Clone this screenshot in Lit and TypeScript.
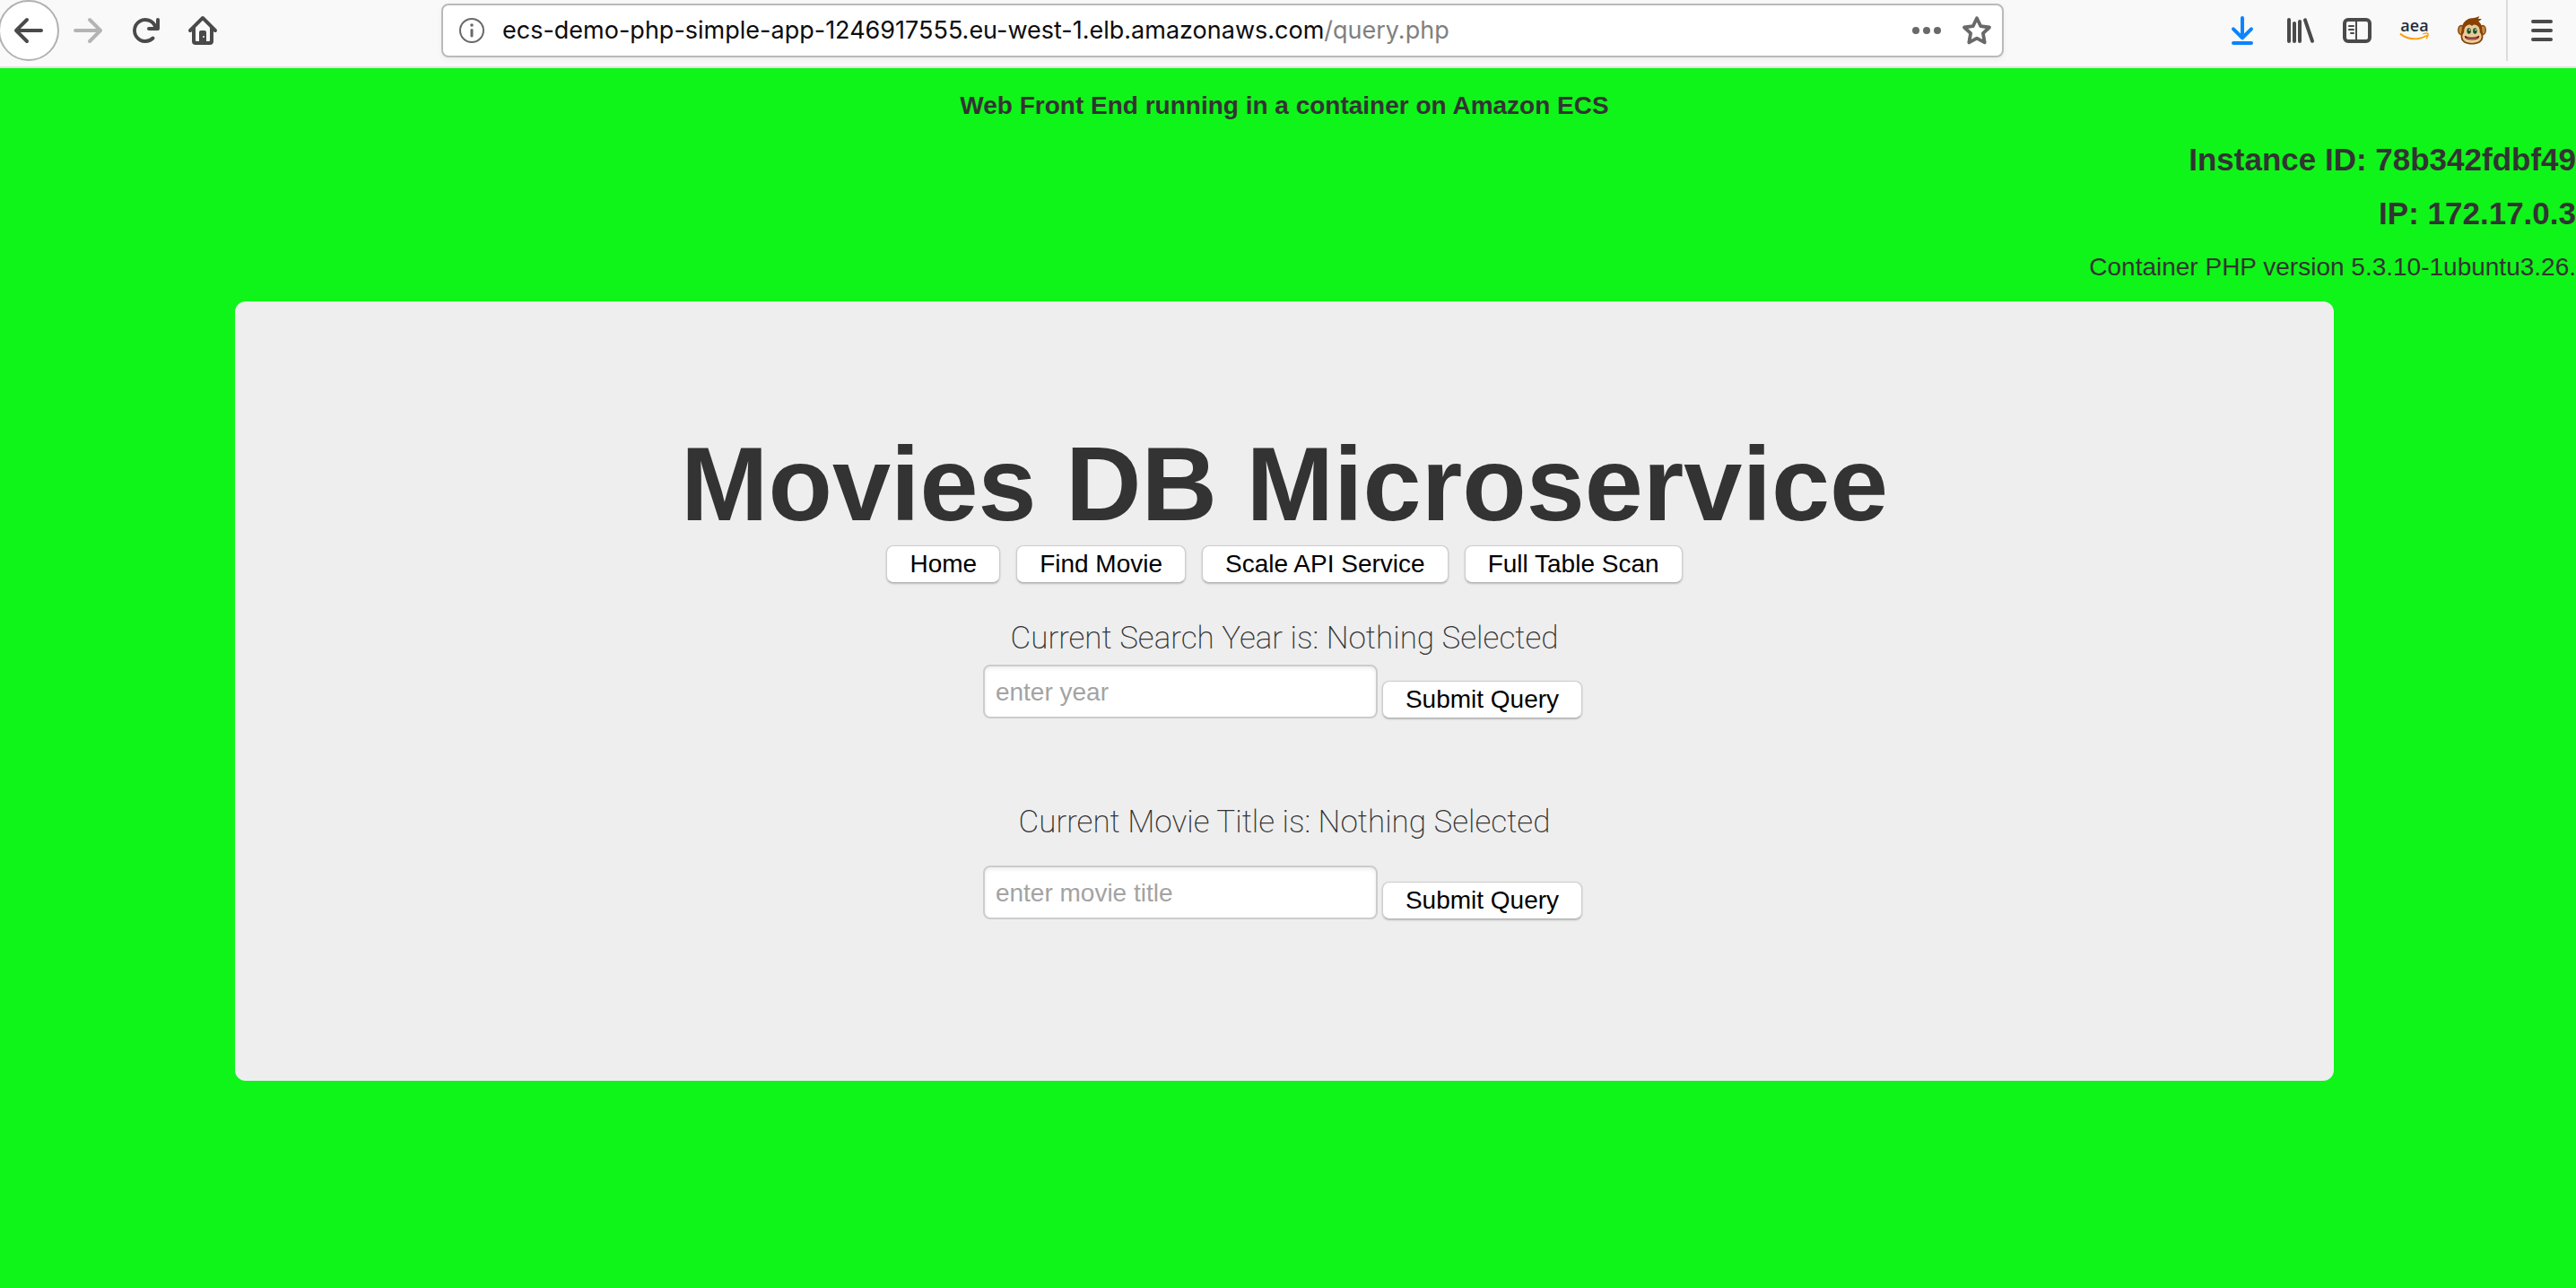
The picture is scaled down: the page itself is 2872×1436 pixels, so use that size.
import { LitElement, html, css, svg } from "lit";
import { customElement } from "lit/decorators.js";

const icon = (body: unknown) => html`<svg class="icon" viewBox="0 0 16 16" aria-hidden="true">${body}</svg>`;

const icons = {
  back: svg`<path d="M15 7H3.414l4.293-4.293a1 1 0 0 0-1.414-1.414l-6 6a1 1 0 0 0 0 1.414l6 6a1 1 0 0 0 1.414-1.414L3.414 9H15a1 1 0 0 0 0-2z"/>`,
  forward: svg`<path d="M1 7h11.586L8.293 2.707a1 1 0 0 1 1.414-1.414l6 6a1 1 0 0 1 0 1.414l-6 6a1 1 0 0 1-1.414-1.414L12.586 9H1a1 1 0 0 1 0-2z"/>`,
  reload: svg`<path d="M15 1a1 1 0 0 0-1 1v2.418A6.995 6.995 0 1 0 8 15a6.954 6.954 0 0 0 4.95-2.05 1 1 0 0 0-1.414-1.414A5.019 5.019 0 1 1 12.549 6H10a1 1 0 0 0 0 2h5a1 1 0 0 0 1-1V2a1 1 0 0 0-1-1z"/>`,
  home: svg`<path fill-rule="evenodd" d="M15.707 7.293l-7-7a1 1 0 0 0-1.414 0l-7 7a1 1 0 0 0 1.414 1.414L2 8.414V14a2 2 0 0 0 2 2h8a2 2 0 0 0 2-2V8.414l.293.293a1 1 0 0 0 1.414-1.414zM12 13.500a.5.5 0 0 1-.5.5H10V9a1 1 0 0 0-1-1H7a1 1 0 0 0-1 1v5H4.500a.5.5 0 0 1-.5-.5V6.414l4-4 4 4zM8.500 11a.5.5 0 1 1 0 1 .5.5 0 0 1 0-1z"/>`,
  info: svg`<circle cx="8" cy="8" r="6.500" fill="none" stroke="currentColor"/><circle cx="8" cy="5" r=".9"/><rect x="7.250" y="7" width="1.500" height="4.800" rx=".75"/>`,
  more: svg`<circle cx="2" cy="8" r="2"/><circle cx="8" cy="8" r="2"/><circle cx="14" cy="8" r="2"/>`,
  star: svg`<path d="M8 1.100l2.150 4.500 4.850.65-3.550 3.350.9 5.100L8 12.300l-4.350 2.400.9-5.100L1 6.250l4.850-.65z" fill="none" stroke="currentColor" stroke-width="1.900" stroke-linejoin="round"/>`,
  download: svg`<path d="M8 1v11M3 7.200l5 4.900 5-4.900M3 15h10" fill="none" stroke="currentColor" stroke-width="2" stroke-linecap="round" stroke-linejoin="round"/>`,
  library: svg`<path d="M2 2v12M5 4v10M8 3v11M11 2.200l4 11.700" fill="none" stroke="currentColor" stroke-width="2" stroke-linecap="round"/>`,
  sidebar: svg`<rect x="1" y="2" width="14" height="12" rx="2" fill="none" stroke="currentColor" stroke-width="2"/><path d="M7.500 2v12" stroke="currentColor"/><path d="M3.500 5.500H6M3.500 7.500H6M4.500 9.500H6" stroke="currentColor" stroke-linecap="round"/>`,
  menu: svg`<path d="M3 3h10M3 8h10M3 13h10" stroke="currentColor" stroke-width="2" stroke-linecap="round"/>`,
};

const amazon = html`<svg class="icon" viewBox="0 0 32 32" aria-hidden="true">
  <text x="16" y="17" text-anchor="middle" class="aea">aea</text>
  <path d="M.5 20c8 6.500 20 7 29 1.800" fill="none" stroke="#ff9900" stroke-width="1.900" stroke-linecap="round"/>
  <path d="M26 19.700c2-.8 4.200-.9 5-.4.400 1.400-.3 3.800-1.700 5.400" fill="none" stroke="#ff9900" stroke-width="1.400" stroke-linecap="round" stroke-linejoin="round"/>
</svg>`;

const monkey = html`<svg class="icon" viewBox="0 0 32 32" aria-hidden="true">
  <ellipse cx="4" cy="15.500" rx="3.300" ry="5" fill="#c98a48" stroke="#874203" stroke-width="1.300"/>
  <ellipse cx="28" cy="15.500" rx="3.300" ry="5" fill="#c98a48" stroke="#874203" stroke-width="1.300"/>
  <path d="M4.800 13C5.500 6 11 2.500 16 2.200 19.500 2 22 1 24.300.2c-.5 1.300-.9 2-1.700 2.900 1.800 0 3-.1 4.200.1-1 1.200-2.200 2-3.500 2.500 2.600 2.100 3.900 5 3.900 8.300 0 3.500 1.600 6 1.200 9.500C27.800 29.300 22.500 31.500 16 31.500S4.200 29.300 3.600 23.500c-.3-3.500 1-6 1.200-10.500z" fill="#874203"/>
  <path d="M10.800 10.200c2-1 3.600-.7 5.200.7 1.600-1.400 3.200-1.700 5.200-.7 3.400 1.700 3.600 5.500 3.600 8 1.700 1.600 2 3.700 1.800 5.300-.5 4.600-5.300 6.400-10.600 6.400S5.900 28.100 5.400 23.500c-.2-1.600.1-3.700 1.800-5.300 0-2.500.2-6.300 3.600-8z" fill="#e9cb98"/>
  <ellipse cx="12.600" cy="16.500" rx="2.200" ry="3.200" fill="#14502a"/>
  <ellipse cx="19.400" cy="16.500" rx="2.200" ry="3.200" fill="#14502a"/>
  <circle cx="13.200" cy="15.400" r=".8" fill="#fff"/><circle cx="20" cy="15.400" r=".8" fill="#fff"/>
  <path d="M8.300 22.500c3.500 2.400 11.900 2.400 15.400 0-.2 2.600-3.400 3.500-7.700 3.500s-7.500-.9-7.700-3.500z" fill="#f3dede" stroke="#7a1414" stroke-width="1.200" stroke-linejoin="round"/>
</svg>`;

@customElement("browser-toolbar")
export class BrowserToolbar extends LitElement {
  static styles = css`
    :host {
      display: flex;
      align-items: center;
      box-sizing: border-box;
      height: 76px;
      padding: 0 22px 6px 0;
      background: #f9f9f9;
      border-bottom: 2px solid #e1e1e2;
      color: #4a4a4a;
      font-family: Inter, "Noto Sans", sans-serif;
    }
    button {
      display: flex;
      align-items: center;
      justify-content: center;
      flex: none;
      margin: 0;
      padding: 0;
      border: 0;
      background: none;
      color: inherit;
    }
    .icon {
      display: block;
      width: 32px;
      height: 32px;
      overflow: visible;
      fill: currentColor;
    }
    .nav,
    .tools {
      display: flex;
      align-items: center;
      gap: 32px;
    }
    .back {
      box-sizing: border-box;
      width: 68px;
      height: 68px;
      margin: 0 -16px 0 -2px;
      border: 2px solid #b1b1b1;
      border-radius: 50%;
      background: #fff;
    }
    .forward {
      color: #b4b4b4;
    }
    .location {
      display: flex;
      align-items: center;
      flex: 1;
      box-sizing: border-box;
      height: 60px;
      margin: 0 250px;
      padding: 0 12px 0 16px;
      border: 2px solid #bababa;
      border-radius: 8px;
      background: #fff;
      box-shadow: 0 2px 6px rgba(0, 0, 0, 0.06);
      color: #696969;
    }
    .url {
      flex: 1;
      margin: 0 0 0 18px;
      font-size: 27px;
      line-height: 36px;
      white-space: nowrap;
      color: #808080;
    }
    .host {
      color: #0c0c0d;
    }
    .star {
      margin-left: 24px;
    }
    .download {
      color: #0a84ff;
    }
    .aea {
      font: 600 18px "Open Sans", sans-serif;
      fill: #232f3e;
    }
    .divider {
      width: 2px;
      height: 68px;
      margin: 0 22px;
      background: #dcdcdc;
    }
  `;

  render() {
    return html`
      <nav class="nav" aria-label="Navigation">
        <button class="back" aria-label="Back">${icon(icons.back)}</button>
        <button class="forward" aria-label="Forward">${icon(icons.forward)}</button>
        <button aria-label="Reload">${icon(icons.reload)}</button>
        <button aria-label="Home">${icon(icons.home)}</button>
      </nav>
      <div class="location">
        <button aria-label="Site information">${icon(icons.info)}</button>
        <p class="url"><span class="host">ecs-demo-php-simple-app-1246917555.eu-west-1.elb.amazonaws.com</span>/query.php</p>
        <button aria-label="Page actions">${icon(icons.more)}</button>
        <button class="star" aria-label="Bookmark this page">${icon(icons.star)}</button>
      </div>
      <div class="tools">
        <button class="download" aria-label="Downloads">${icon(icons.download)}</button>
        <button aria-label="Library">${icon(icons.library)}</button>
        <button aria-label="Sidebars">${icon(icons.sidebar)}</button>
        <button aria-label="Amazon assistant">${amazon}</button>
        <button aria-label="Monkey">${monkey}</button>
      </div>
      <div class="divider"></div>
      <button aria-label="Menu">${icon(icons.menu)}</button>
    `;
  }
}

@customElement("app-root")
export class AppRoot extends LitElement {
  static styles = css`
    :host {
      display: flex;
      flex-direction: column;
      min-height: 100vh;
      background: #0ff519;
      color: #333;
      font: 28px/40px "Liberation Sans", Arial, sans-serif;
    }
    h1,
    h2,
    h3,
    p {
      margin: 0;
    }
    .page {
      display: flex;
      flex-direction: column;
      gap: 20px;
      padding: 22px 0;
    }
    .banner {
      padding-right: 8px;
      font-size: 28px;
      text-align: center;
    }
    .detail {
      font-size: 35px;
      text-align: right;
    }
    .version {
      text-align: right;
    }
    .card {
      display: flex;
      flex-direction: column;
      align-items: center;
      box-sizing: border-box;
      width: calc(100% - 64px);
      max-width: 2340px;
      margin: -2px auto 0;
      padding: 144px 120px 180px;
      border-radius: 12px;
      background: #eee;
    }
    .holder {
      padding-right: 8px;
    }
    .title {
      font-size: 117px;
      line-height: 120px;
      text-align: center;
    }
    .menu {
      display: flex;
      flex-wrap: wrap;
      justify-content: center;
      gap: 18px;
      margin-top: 8px;
    }
    .button {
      box-sizing: border-box;
      height: 42px;
      margin: 0;
      padding: 0 25px;
      border: 1px solid #cdcdcd;
      border-bottom-color: #b4b4b4;
      border-radius: 8px;
      background: #fff;
      box-shadow: 0 1px 2px rgba(0, 0, 0, 0.22);
      color: #000;
      font: 28px/36px "Liberation Sans", Arial, sans-serif;
    }
    .query {
      display: flex;
      flex-direction: column;
      align-items: center;
      gap: 9px;
      margin-top: 42px;
    }
    .query.movie {
      gap: 28px;
      margin-top: 96px;
    }
    .label {
      font-family: Roboto, "Liberation Sans", sans-serif;
      font-size: 35px;
      font-weight: 200;
    }
    .fields {
      display: flex;
      align-items: flex-end;
      gap: 5px;
      padding-right: 4px;
    }
    .input {
      box-sizing: border-box;
      width: 440px;
      height: 60px;
      margin: 0;
      padding: 2px 12px 0;
      border: 2px solid #ccc;
      border-radius: 8px;
      background: #fff;
      box-shadow: inset 0 2px 4px rgba(0, 0, 0, 0.08);
      color: #555;
      font: 28px/40px "Liberation Sans", Arial, sans-serif;
    }
    .input::placeholder {
      color: #a3a3a3;
      opacity: 1;
    }
  `;

  render() {
    return html`
      <browser-toolbar></browser-toolbar>
      <main class="page">
        <h3 class="banner">Web Front End running in a container on Amazon ECS</h3>
        <h2 class="detail">Instance ID: 78b342fdbf49</h2>
        <h2 class="detail">IP: 172.17.0.3</h2>
        <p class="version">Container PHP version 5.3.10-1ubuntu3.26.</p>
        <div class="holder">
          <section class="card">
            <h1 class="title">Movies DB Microservice</h1>
            <nav class="menu" aria-label="Pages">
              ${["Home", "Find Movie", "Scale API Service", "Full Table Scan"].map(
                (name) => html`<button class="button" type="button">${name}</button>`,
              )}
            </nav>
            <form class="query">
              <label class="label" for="year">Current Search Year is: Nothing Selected</label>
              <div class="fields">
                <input class="input" id="year" type="text" placeholder="enter year" />
                <button class="button" type="submit">Submit Query</button>
              </div>
            </form>
            <form class="query movie">
              <label class="label" for="movie">Current Movie Title is: Nothing Selected</label>
              <div class="fields">
                <input class="input" id="movie" type="text" placeholder="enter movie title" />
                <button class="button" type="submit">Submit Query</button>
              </div>
            </form>
          </section>
        </div>
      </main>
    `;
  }
}
